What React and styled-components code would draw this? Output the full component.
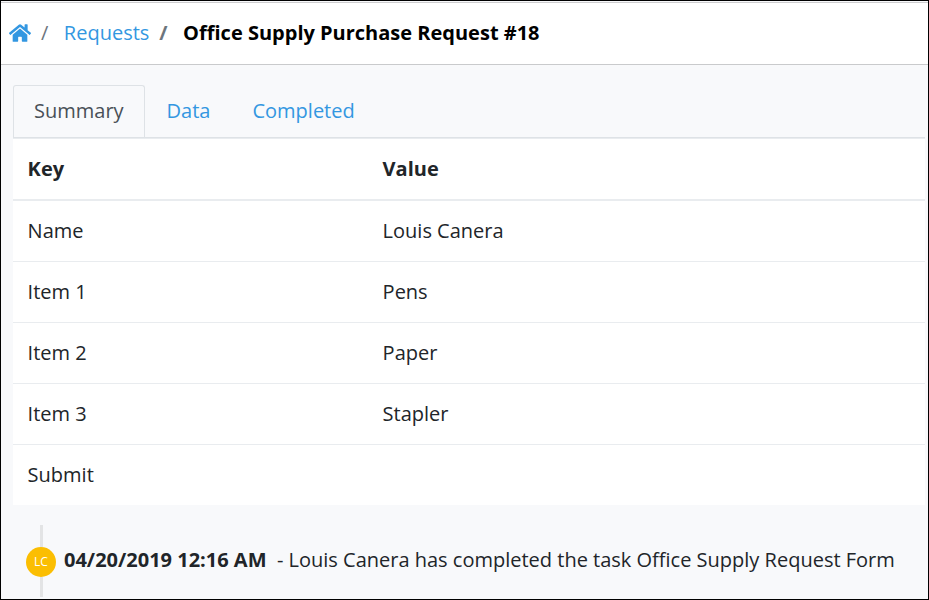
import React from "react";
import styled, { createGlobalStyle, css } from "styled-components";

const GlobalStyle = createGlobalStyle`
  *, *::before, *::after { box-sizing: border-box; }
  body { margin: 0; overflow: hidden; background: #f8f9fb; }
`;

const Page = styled.div`
  width: 929px;
  height: 600px;
  overflow: hidden;
  display: flex;
  flex-direction: column;
  border: 1px solid #000;
  background: #f8f9fb;
  color: #212529;
  font: 400 20px/30px "Open Sans", sans-serif;
  white-space: nowrap;
`;

const Breadcrumb = styled.nav`
  display: flex;
  align-items: center;
  flex: none;
  height: 63px;
  margin-top: 1px;
  padding: 0 0 1px 8px;
  border-top: 1px solid #cdcdcf;
  border-bottom: 1px solid #c9cacc;
  background: #fff;
`;

const HomeIcon = styled.svg`
  width: 22px;
  height: 20px;
  fill: #3397e1;
`;

const Separator = styled.span`
  margin: 0 15.5px 0 10px;
  color: #6c757d;
  font-weight: ${(p) => (p.$bold ? 700 : 400)};
`;

const link = css`
  color: #3397e1;
  text-decoration: none;
`;

const Crumb = styled.a`
  ${link}
`;

const Current = styled.strong`
  color: #000;
  font-weight: 700;
`;

const Tabs = styled.div`
  display: flex;
  flex: none;
  height: 53px;
  margin: 20px 3px 0 12px;
  border-bottom: 1px solid #dee2e6;
`;

const Tab = styled.a`
  ${link}
  padding: 10px 20px;
  border: 1px solid transparent;
  ${(p) => p.$active && css`
    margin-right: 1px;
    color: #495057;
    border-color: #dee2e6;
    border-bottom: 0;
    border-radius: 3px 3px 0 0;
  `}
`;

const Table = styled.div`
  flex: none;
  margin: 0 3px 0 12px;
  background: #fff;
`;

const Row = styled.div`
  display: grid;
  grid-template-columns: 355px 1fr;
  align-items: center;
  height: 61px;
  padding-left: 14.6px;
  border-top: 1px solid #e9ecef;
  ${(p) => p.$head && css`
    height: 62px;
    border-bottom: 1px solid #e9ecef;
    font-weight: 700;
  `}
`;

const Timeline = styled.div`
  display: flex;
  flex: none;
  align-items: center;
  height: 72px;
  margin: 20px 0 0 25px;
`;

const Marker = styled.div`
  display: flex;
  flex-direction: column;
  align-items: center;
  width: 30px;
  height: 72px;
`;

const Stem = styled.div`
  width: 3px;
  height: ${(p) => p.$height}px;
  background: #e3e4e5;
`;

const Avatar = styled.div`
  width: 30px;
  height: 30px;
  border-radius: 50%;
  background: #fbbe02;
  color: #fff;
  font-size: 12px;
  font-weight: 500;
  line-height: 30px;
  text-align: center;
`;

const Event = styled.div`
  margin-left: 8px;
  padding-bottom: 2px;
`;

const rows = [["Name", "Louis Canera"], ["Item 1", "Pens"], ["Item 2", "Paper"], ["Item 3", "Stapler"], ["Submit", ""]];

export default function App() {
  return (
    <Page>
      <GlobalStyle />
      <Breadcrumb>
        <HomeIcon viewBox="0 0 576 512" preserveAspectRatio="none">
          <path d="M280.4 148.3L96 300.100V464a16 16 0 0 0 16 16l112.100-.3a16 16 0 0 0 15.900-16V368a16 16 0 0 1 16-16h64a16 16 0 0 1 16 16v95.600a16 16 0 0 0 16 16.100L464 480a16 16 0 0 0 16-16V300L295.700 148.300a12.200 12.200 0 0 0-15.300 0zM571.600 251.500L488 182.600V44.100a12 12 0 0 0-12-12h-56a12 12 0 0 0-12 12v72.600L318.500 43a48 48 0 0 0-61 0L4.300 251.500a12 12 0 0 0-1.600 16.900l25.500 31a12 12 0 0 0 16.900 1.600L280.400 107.300a12.200 12.200 0 0 1 15.300 0L531 301a12 12 0 0 0 16.900-1.600l25.500-31a12 12 0 0 0-1.800-16.900z" />
        </HomeIcon>
        <Separator>/</Separator>
        <Crumb>Requests</Crumb>
        <Separator $bold>/</Separator>
        <Current>Office Supply Purchase Request #18</Current>
      </Breadcrumb>
      <Tabs>
        <Tab $active>Summary</Tab>
        <Tab>Data</Tab>
        <Tab>Completed</Tab>
      </Tabs>
      <Table>
        <Row $head><span>Key</span><span>Value</span></Row>
        {rows.map(([k, v]) => <Row key={k}><span>{k}</span><span>{v}</span></Row>)}
      </Table>
      <Timeline>
        <Marker><Stem $height={22} /><Avatar>LC</Avatar><Stem $height={20} /></Marker>
        <Event><strong>04/20/2019 12:16 AM</strong>&nbsp; - Louis Canera has completed the task Office Supply Request Form</Event>
      </Timeline>
    </Page>
  );
}
